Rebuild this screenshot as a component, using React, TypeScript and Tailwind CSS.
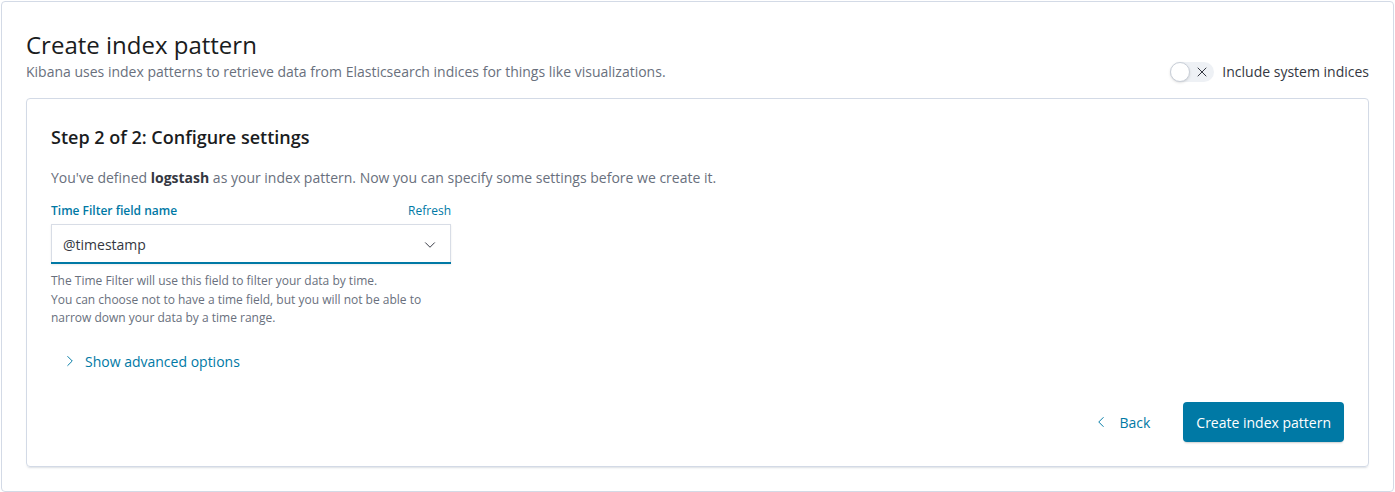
import { ChevronDown, ChevronLeft, ChevronRight, X } from 'lucide-react'

const font = { fontFamily: '"Open Sans", "Noto Sans", sans-serif' }

function SystemToggle() {
  return (
    <div className="flex items-center gap-2">
      <div className="relative w-[44px] h-[20px] rounded-full bg-[#eef1f5] flex items-center justify-end pr-[4px]">
        <span className="absolute left-0 top-0 w-[20px] h-[20px] rounded-full bg-white border border-[#c9cfd8] shadow-sm" />
        <X size={16} strokeWidth={1.5} className="text-[#343741]" />
      </div>
      <span className="text-[14px] text-[#343741]">Include system indices</span>
    </div>
  )
}

export default function App() {
  return (
    <div className="w-[1395px] h-[492px] bg-white pt-px px-px" style={font}>
      <div className="h-full border border-[#d3dae6] rounded-[4px] px-6 pt-[26px] pb-6 flex flex-col">
        <div className="flex items-end justify-between">
          <div>
            <h1 className="text-[24px] leading-[34px] text-[#1a1c21] font-normal">Create index pattern</h1>
            <p className="text-[14px] leading-[20px] text-[#69707d]">
              Kibana uses index patterns to retrieve data from Elasticsearch indices for things like visualizations.
            </p>
          </div>
          <SystemToggle />
        </div>

        <div className="mt-[16px] flex-1 border border-[#d3dae6] rounded-[4px] shadow-[0_2px_2px_-1px_rgba(152,162,179,0.35)] p-6 flex flex-col">
          <h2 className="text-[18px] leading-[28px] font-semibold text-[#1a1c21]">Step 2 of 2: Configure settings</h2>
          <p className="mt-[16px] text-[14px] leading-[22px] text-[#69707d]">
            You've defined <b className="font-bold text-[#343741]">logstash</b> as your index pattern. Now you can specify some settings before we create it.
          </p>

          <div className="mt-[13px] w-[400px]">
            <div className="flex justify-between items-center h-[18px]">
              <span className="text-[12px] font-semibold text-[#0079a5]">Time Filter field name</span>
              <span className="text-[12px] text-[#0079a5]">Refresh</span>
            </div>
            <div className="mt-[4px] h-[40px] bg-white border border-[#d8dde6] border-b-0 flex items-center justify-between pl-[11px] pr-[11px] shadow-[0_1px_2px_rgba(0,0,0,0.08)] relative">
              <span className="text-[14px] text-[#343741]">@timestamp</span>
              <ChevronDown size={18} strokeWidth={1.3} className="text-[#343741]" />
              <span className="absolute left-[-1px] right-[-1px] bottom-0 h-[2px] bg-[#0079a5]" />
            </div>
            <div className="mt-[8px] text-[12px] leading-[18.5px] text-[#69707d]">
              <p>The Time Filter will use this field to filter your data by time.</p>
              <p>You can choose not to have a time field, but you will not be able to narrow down your data by a time range.</p>
            </div>
          </div>

          <div className="mt-[23px] flex items-center gap-[6px] pl-[10px] text-[#0079a5]">
            <ChevronRight size={18} strokeWidth={1.3} />
            <span className="text-[14px]">Show advanced options</span>
          </div>

          <div className="mt-auto flex justify-end items-center gap-[33px]">
            <div className="flex items-center gap-[9px] text-[#0079a5]">
              <ChevronLeft size={18} strokeWidth={1.3} />
              <span className="text-[14px]">Back</span>
            </div>
            <button className="h-[40px] px-[13px] rounded-[4px] bg-[#0079a5] text-white text-[14px] shadow-[0_2px_2px_-1px_rgba(0,0,0,0.2)]">
              Create index pattern
            </button>
          </div>
        </div>
      </div>
    </div>
  )
}
